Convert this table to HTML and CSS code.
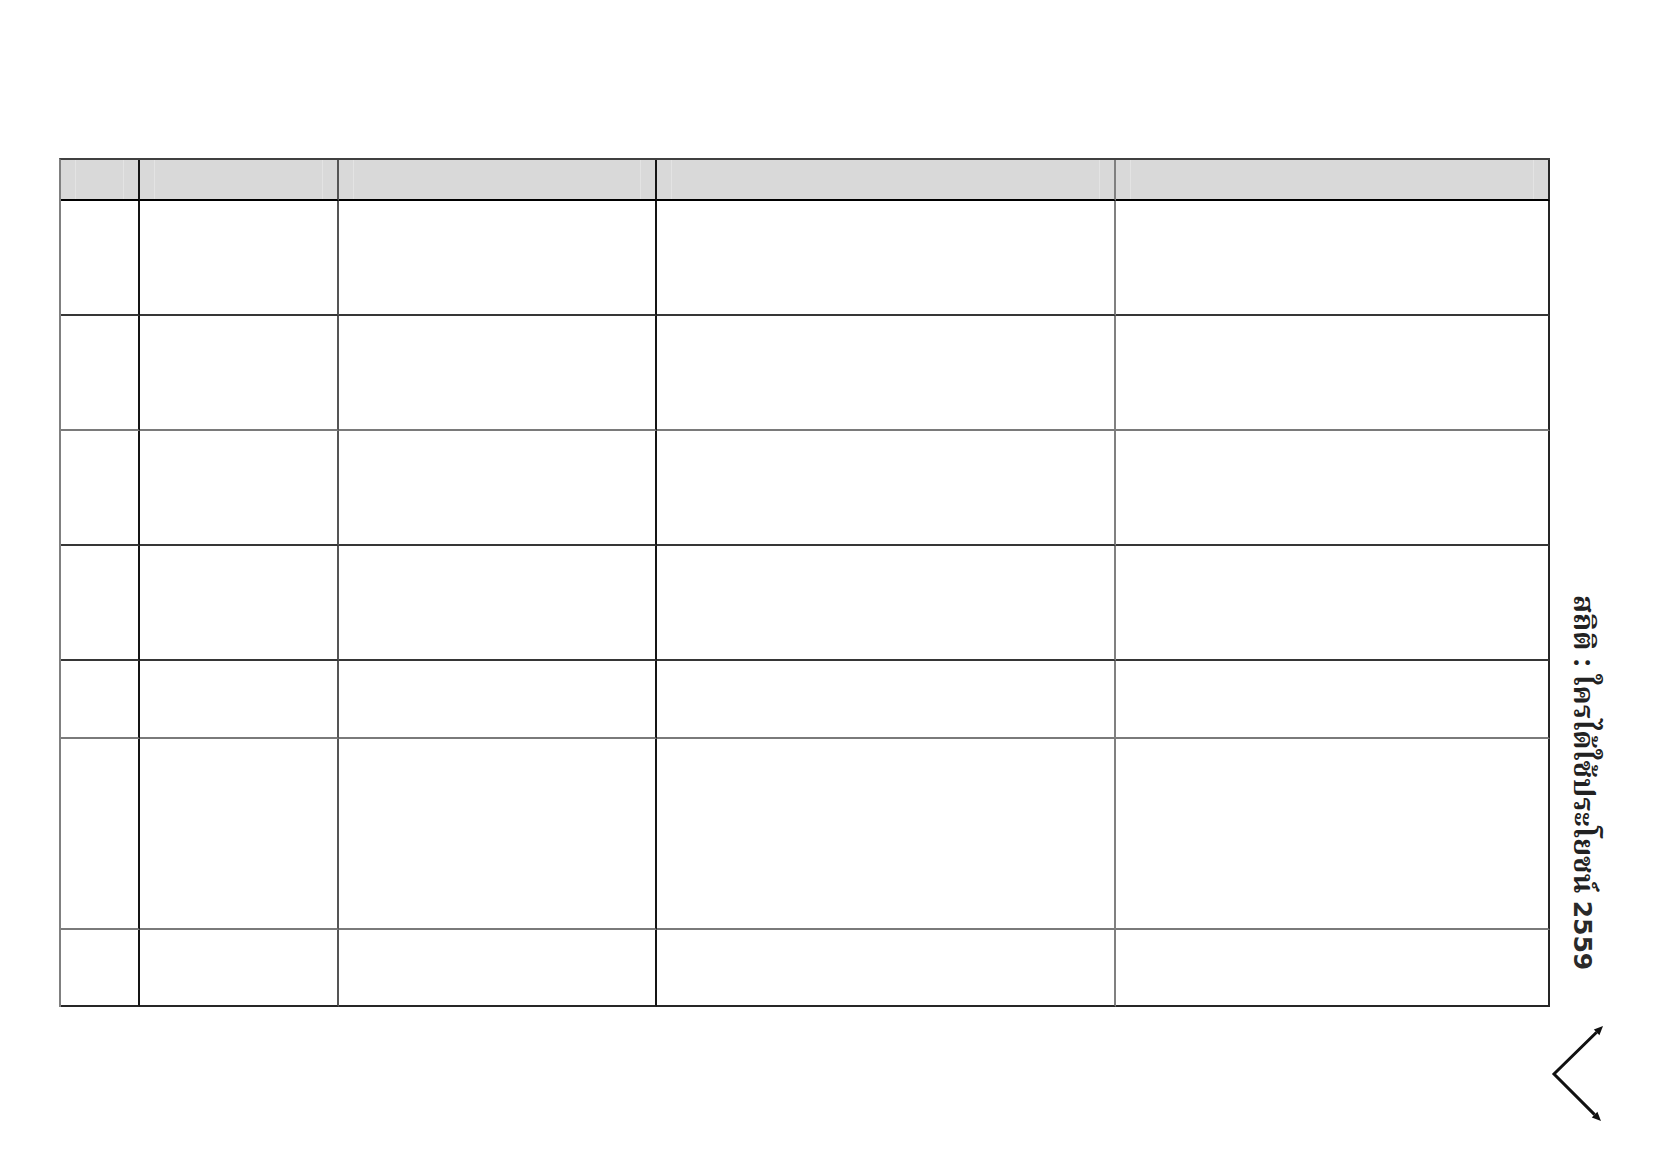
FILE: index.html
```html
<!DOCTYPE html>
<html lang="th">
<head>
<meta charset="utf-8">
<title>สถิติ : ใครได้ใช้ประโยชน์ 2559</title>
<link rel="stylesheet" href="styles.css">
</head>
<body>
<div class="page">
  <div class="grid">
    <div class="cell head c1"><div class="head-inner"></div></div>
    <div class="cell head c2"><div class="head-inner"></div></div>
    <div class="cell head c3"><div class="head-inner"></div></div>
    <div class="cell head c4"><div class="head-inner"></div></div>
    <div class="cell head c5"><div class="head-inner"></div></div>

    <div class="cell r-dark c1"></div><div class="cell r-dark c2"></div><div class="cell r-dark c3"></div><div class="cell r-dark c4"></div><div class="cell r-dark c5"></div>
    <div class="cell r-gray c1"></div><div class="cell r-gray c2"></div><div class="cell r-gray c3"></div><div class="cell r-gray c4"></div><div class="cell r-gray c5"></div>
    <div class="cell r-dark c1"></div><div class="cell r-dark c2"></div><div class="cell r-dark c3"></div><div class="cell r-dark c4"></div><div class="cell r-dark c5"></div>
    <div class="cell r-dark c1"></div><div class="cell r-dark c2"></div><div class="cell r-dark c3"></div><div class="cell r-dark c4"></div><div class="cell r-dark c5"></div>
    <div class="cell r-gray c1"></div><div class="cell r-gray c2"></div><div class="cell r-gray c3"></div><div class="cell r-gray c4"></div><div class="cell r-gray c5"></div>
    <div class="cell r-gray c1"></div><div class="cell r-gray c2"></div><div class="cell r-gray c3"></div><div class="cell r-gray c4"></div><div class="cell r-gray c5"></div>
    <div class="cell r-last c1"></div><div class="cell r-last c2"></div><div class="cell r-last c3"></div><div class="cell r-last c4"></div><div class="cell r-last c5"></div>
  </div>
  <div class="side">
    <div class="vtitle">สถิติ : ใครได้ใช้ประโยชน์ <span class="year">2559</span></div>
    <svg class="arrow" width="56" height="100" viewBox="0 0 56 100">
      <polyline points="46.6,8.3 4,50 44.6,90.6" fill="none" stroke="#111" stroke-width="3" stroke-linejoin="miter"/>
      <polygon points="53,2 49.4,11.2 43.8,5.4" fill="#111"/>
      <polygon points="51,97 47.4,87.8 41.8,93.4" fill="#111"/>
    </svg>
  </div>
</div>
</body>
</html>
```

FILE: styles.css
```css
html, body {
  margin: 0;
  padding: 0;
  background: #ffffff;
}

.page {
  display: flex;
  align-items: flex-start;
  padding: 158px 0 0 59px;
}

.grid {
  display: grid;
  grid-template-columns: 79px 199px 318px 459px 434px;
  grid-template-rows: 41px 115px 115px 115px 115px 78px 191px 77px;
  border-left: 2px solid #808080;
  border-top: 2px solid #404040;
  flex: none;
}

.cell {
  box-sizing: border-box;
  border-right: 2px solid #333;
  border-bottom: 2px solid #333;
}

.c1 { border-right-color: #151515; }
.c2 { border-right-color: #555555; }
.c3 { border-right-color: #151515; }
.c4 { border-right-color: #808080; }
.c5 { border-right-color: #262626; }

.head {
  background: #d9d9d9;
  border-bottom-color: #000;
  padding: 0 14px;
}

.head-inner {
  height: 100%;
  border-left: 1px solid #e3e3e3;
  border-right: 1px solid #e3e3e3;
}

.r-dark { border-bottom-color: #363636; }
.r-gray { border-bottom-color: #7a7a7a; }
.r-last { border-bottom-color: #262626; }

.side {
  display: flex;
  flex-direction: column;
  align-items: flex-start;
}

.vtitle {
  writing-mode: vertical-rl;
  height: 374px;
  margin: 437px 0 0 17px;
  font-family: "Noto Serif Thai", "Noto Sans Thai", "Loma", "Garuda", sans-serif;
  font-size: 29px;
  font-weight: 700;
  line-height: 30px;
  color: #222222;
  white-space: nowrap;
}

.year {
  font-family: "DejaVu Sans", sans-serif;
  font-size: 25px;
  font-weight: 600;
  color: #2a2a2a;
}

.arrow {
  display: block;
  margin-top: 55px;
}
```
